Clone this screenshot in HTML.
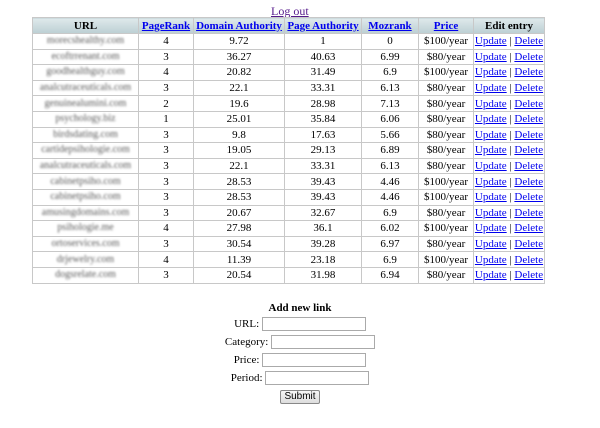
<!DOCTYPE html>
<html><head><style>
body{margin:0;background:#fff;font-family:"Liberation Serif",serif;font-size:11px;color:#000}
.lo{position:absolute;left:271px;top:4px;color:#551a8b;text-decoration:underline;font-size:12px}
table{position:absolute;left:32px;top:17px;border-collapse:collapse;width:512px;border:1px solid #bbb;table-layout:fixed}
td,th{border:1px solid #c8c8c8;padding:0;text-align:center;height:14.6px;line-height:14px;white-space:nowrap;overflow:hidden}
th{background:linear-gradient(#dfe9eb,#bccfd3);height:15px}
th a{color:#0000ee;text-decoration:underline}
td a{color:#0000ee;text-decoration:underline}
td.u{color:#5a5a5a;filter:blur(1px);font-size:10px}
form{position:absolute;left:0;top:301px;width:600px;text-align:center}
.r{height:18px;line-height:18px}
.h{height:14px;line-height:14px}
input[type=text]{width:102px;height:12px;border:1px solid #aaa;padding:0;margin:0;vertical-align:middle}
button{font-family:"Liberation Sans",sans-serif;font-size:10px;height:14px;padding:0 3px;border:1px solid #888;border-radius:2px;background:linear-gradient(#f6f6f6,#ddd);margin-top:1px}
</style></head><body>
<a class="lo">Log out</a>
<table>
<colgroup><col style="width:106px"><col style="width:55px"><col style="width:91px"><col style="width:77px"><col style="width:57px"><col style="width:55px"><col style="width:71px"></colgroup>
<tr><th>URL</th><th><a>PageRank</a></th><th><a>Domain Authority</a></th><th><a>Page Authority</a></th><th><a>Mozrank</a></th><th><a>Price</a></th><th>Edit entry</th></tr>
<tr><td class="u">morecshealthy.com</td><td>4</td><td>9.72</td><td>1</td><td>0</td><td>$100/year</td><td><a>Update</a> | <a>Delete</a></td></tr>
<tr><td class="u">ecoftrrenant.com</td><td>3</td><td>36.27</td><td>40.63</td><td>6.99</td><td>$80/year</td><td><a>Update</a> | <a>Delete</a></td></tr>
<tr><td class="u">goodhealthguy.com</td><td>4</td><td>20.82</td><td>31.49</td><td>6.9</td><td>$100/year</td><td><a>Update</a> | <a>Delete</a></td></tr>
<tr><td class="u">analcutraceuticals.com</td><td>3</td><td>22.1</td><td>33.31</td><td>6.13</td><td>$80/year</td><td><a>Update</a> | <a>Delete</a></td></tr>
<tr><td class="u">genuinealumini.com</td><td>2</td><td>19.6</td><td>28.98</td><td>7.13</td><td>$80/year</td><td><a>Update</a> | <a>Delete</a></td></tr>
<tr><td class="u">psychology.biz</td><td>1</td><td>25.01</td><td>35.84</td><td>6.06</td><td>$80/year</td><td><a>Update</a> | <a>Delete</a></td></tr>
<tr><td class="u">birdsdating.com</td><td>3</td><td>9.8</td><td>17.63</td><td>5.66</td><td>$80/year</td><td><a>Update</a> | <a>Delete</a></td></tr>
<tr><td class="u">cartidepsihologie.com</td><td>3</td><td>19.05</td><td>29.13</td><td>6.89</td><td>$80/year</td><td><a>Update</a> | <a>Delete</a></td></tr>
<tr><td class="u">analcutraceuticals.com</td><td>3</td><td>22.1</td><td>33.31</td><td>6.13</td><td>$80/year</td><td><a>Update</a> | <a>Delete</a></td></tr>
<tr><td class="u">cabinetpsiho.com</td><td>3</td><td>28.53</td><td>39.43</td><td>4.46</td><td>$100/year</td><td><a>Update</a> | <a>Delete</a></td></tr>
<tr><td class="u">cabinetpsiho.com</td><td>3</td><td>28.53</td><td>39.43</td><td>4.46</td><td>$100/year</td><td><a>Update</a> | <a>Delete</a></td></tr>
<tr><td class="u">amusingdomains.com</td><td>3</td><td>20.67</td><td>32.67</td><td>6.9</td><td>$80/year</td><td><a>Update</a> | <a>Delete</a></td></tr>
<tr><td class="u">psihologie.me</td><td>4</td><td>27.98</td><td>36.1</td><td>6.02</td><td>$100/year</td><td><a>Update</a> | <a>Delete</a></td></tr>
<tr><td class="u">ortoservices.com</td><td>3</td><td>30.54</td><td>39.28</td><td>6.97</td><td>$80/year</td><td><a>Update</a> | <a>Delete</a></td></tr>
<tr><td class="u">drjewelry.com</td><td>4</td><td>11.39</td><td>23.18</td><td>6.9</td><td>$100/year</td><td><a>Update</a> | <a>Delete</a></td></tr>
<tr><td class="u">dogsrelate.com</td><td>3</td><td>20.54</td><td>31.98</td><td>6.94</td><td>$80/year</td><td><a>Update</a> | <a>Delete</a></td></tr>
</table>
<form>
<div class="h"><b>Add new link</b></div>
<div class="r">URL: <input type="text"></div>
<div class="r">Category: <input type="text"></div>
<div class="r">Price: <input type="text"></div>
<div class="r">Period: <input type="text"></div>
<div class="r"><button type="button">Submit</button></div>
</form>
</body></html>
